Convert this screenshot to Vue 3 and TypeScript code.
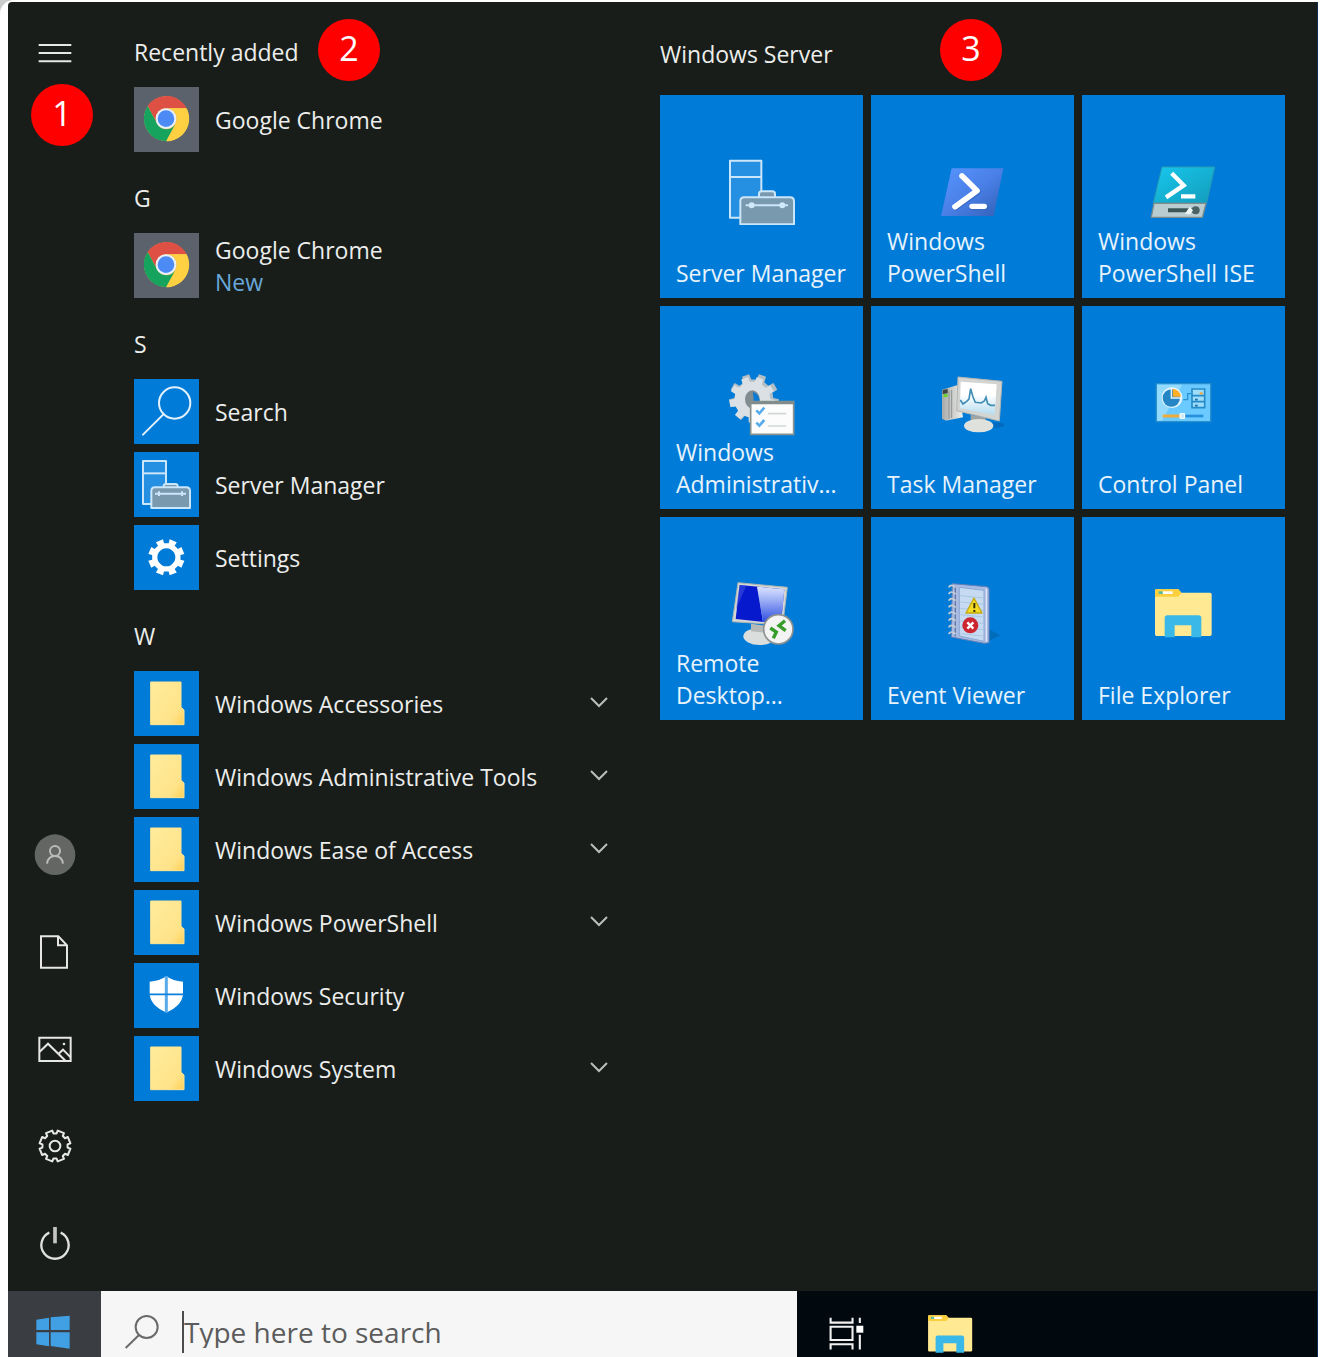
<script setup lang="ts">
import { ref } from 'vue'

interface Icon { box: string; art: string }
interface Entry { name: string; icon: string; note?: string; folder?: boolean }
interface Group { title: string; entries: Entry[] }

// Closed outline of a cog with flared, flat-topped teeth.
function cog(cx: number, cy: number, outer: number, root: number, teeth: number, tip: number, base: number): string {
  const points: string[] = []
  const step = (Math.PI * 2) / teeth
  const at = (r: number, a: number) => `${(cx + r * Math.sin(a)).toFixed(1)} ${(cy - r * Math.cos(a)).toFixed(1)}`
  for (let i = 0; i < teeth; i++) {
    const a = step * (i + 0.5)
    points.push(at(root, a - step * base), at(outer, a - step * tip), at(outer, a + step * tip), at(root, a + step * base))
  }
  return `M${points.join('L')}Z`
}

const explorer = `<path d="M283 92q0-4 4-4h66l9 10h86q5 0 5 5v120q0 5-5 5H287q-4 0-4-5z" fill="#ffe993"/>
<path d="M283 92q0-4 4-4h66l9 10-9 12h-70z" fill="#fcd03c"/><path d="M306 94h30v8h-30z" fill="#fff"/><path d="M294 94h12v8h-12z" fill="#57b9a8"/>
<path d="M312 232v-58q0-8 8-8h94q8 0 8 8v58h-30v-36h-50v36z" fill="#3ab8e8"/>`

const icons: Record<string, Icon> = {
  menu: { box: '92 88 144 144', art: '<path d="M115 136h98M115 160h98M115 185h98" stroke="#e6e6e6" stroke-width="6"/>' },
  user: {
    box: '92 61 144 144',
    art: '<circle cx="164" cy="132" r="61" fill="#636663"/><g fill="none" stroke="#b9bbb9" stroke-width="6"><circle cx="164" cy="121" r="15"/><path d="M140 159q3-23 24-23t24 23"/></g>',
  },
  document: {
    box: '92 352 144 144',
    art: '<path d="M122 377h52l26 27v67h-78zM173 378v26h26" fill="none" stroke="#e6e6e6" stroke-width="6"/>',
  },
  picture: {
    box: '92 643 144 144',
    art: '<g fill="none" stroke="#e6e6e6" stroke-width="6"><path d="M117 681h94v70h-94z"/><path d="M118 723l25-24 53 52M174 730l14-13 23 23"/></g><circle cx="191" cy="700" r="4" fill="#e6e6e6"/>',
  },
  gear: {
    box: '92 35 144 144',
    art: `<g fill="none" stroke="#e6e6e6" stroke-width="6" stroke-linejoin="round"><path d="${cog(164, 107, 47, 38, 8, 0.28, 0.34)}"/><circle cx="164" cy="107" r="16"/></g>`,
  },
  power: {
    box: '92 326 144 144',
    art: '<g fill="none" stroke="#e0e0e0"><path d="M147 367a41 41 0 1 0 34 0" stroke-width="7"/><path d="M164 350v49" stroke-width="11" stroke="#c4c4c4"/></g>',
  },
  chrome: {
    box: '401 262 195 195',
    art: `<circle cx="498" cy="357" r="67" fill="#e8c060"/>
<path d="M442 319A68 68 0 0 1 559 326L498 326A31 31 0 0 0 471 373Z" fill="#df5044"/>
<path d="M559 326A68 68 0 0 1 497 425L525 373A31 31 0 0 0 498 326Z" fill="#ffd142"/>
<path d="M442 319A68 68 0 0 0 497 425L525 373A31 31 0 0 1 471 373Z" fill="#16a35d"/>
<circle cx="497" cy="357" r="31" fill="#e9f0f8"/><circle cx="497" cy="357" r="25" fill="#4c8bf5"/>`,
  },
  search: {
    box: '41 26 195 195',
    art: '<g fill="none" stroke="#e3f1fc" stroke-width="6" stroke-linecap="round"><circle cx="163" cy="98" r="47"/><path d="M129 132L68 193"/></g>',
  },
  server: {
    box: '41 244 195 195',
    art: `<g stroke="#cbe5f9" stroke-width="6" stroke-linejoin="round"><path d="M68 271h69v129H68z" fill="#2590e2"/><path d="M68 308h69"/>
<path d="M130 352v-5q0-7 7-7h28q7 0 7 7v5" fill="#7899ae"/><path d="M93 412v-51q0-11 11-11h94q11 0 11 11v51z" fill="#7899ae"/><path d="M104 369h93M116 362v14M185 362v14"/></g>`,
  },
  settings: {
    box: '41 463 195 195',
    art: `<path fill-rule="evenodd" fill="#fff" d="${cog(138, 560, 55, 43, 8, 0.27, 0.29)}M138 533a27 27 0 1 0 .1 0Z"/>`,
  },
  folder: {
    box: '41 180 195 195',
    art: `<defs><linearGradient id="fold" x2="1" y2="1"><stop stop-color="#ffec9c"/><stop offset=".75" stop-color="#ffe389"/><stop offset="1" stop-color="#ffcf55"/></linearGradient></defs>
<path d="M91 213h91v76l9 8v44H91z" fill="url(#fold)" stroke="#ffe591" stroke-width="3"/>`,
  },
  shield: {
    box: '401 455 195 195',
    art: '<path d="M498 495q20 14 50 16v33q0 38-50 59-50-21-50-59v-33q30-2 50-16z" fill="#fff"/><path d="M498 494v110" stroke="#58aaeb" stroke-width="9"/><path d="M446 549h104" stroke="#0b7fdc" stroke-width="5"/>',
  },
  serverTile: {
    box: '232 231 204 204',
    art: `<g stroke="#cbe5f9" stroke-width="6" stroke-linejoin="round"><path d="M238 242h94v171h-94z" fill="#2590e2"/><path d="M238 291h94"/>
<path d="M325 352v-10q0-8 8-8h32q8 0 8 8v10" fill="#7899ae"/><path d="M269 433v-69q0-12 12-12h137q12 0 12 12v69z" fill="#7899ae"/><path d="M285 376h127"/></g>
<g fill="#cfe8fa"><circle cx="303" cy="376" r="9"/><circle cx="395" cy="376" r="9"/></g>`,
  },
  powershell: {
    box: '56 231 204 204',
    art: `<defs><linearGradient id="ps" x2="1" y2="1"><stop stop-color="#5795fd"/><stop offset=".5" stop-color="#4a80e8"/><stop offset="1" stop-color="#315fb4"/></linearGradient></defs>
<path d="M94 265h155l-29 143H62z" fill="url(#ps)"/><g fill="none" stroke-linecap="round" stroke-linejoin="round"><path d="M128 293l47 42-68 50M154 383h45" stroke="#2f5fb8" stroke-width="15" opacity=".5"/><path d="M125 288l45 44-66 48" stroke="#fff" stroke-width="17"/><path d="M155 379h37" stroke="#fff" stroke-width="16"/></g>`,
  },
  ise: {
    box: '688 231 204 204',
    art: `<defs><linearGradient id="ise" x2="1" y2="1"><stop stop-color="#16c8ec"/><stop offset="1" stop-color="#149bbb"/></linearGradient></defs>
<path d="M724 261h158l-24 108H698z" fill="url(#ise)" stroke="#269bb5" stroke-width="3"/><path d="M700 370h156l-11 42H692z" fill="#b9cdd0" stroke="#7f8d8a" stroke-width="4"/>
<g fill="none" stroke="#fff"><path d="M753 280l36 36-53 36" stroke-width="13"/><path d="M781 349h43" stroke-width="13"/></g>
<path d="M742 391h92" stroke="#3c5658" stroke-width="12"/><circle cx="825" cy="391" r="12" fill="#4b6365"/><path d="M793 401l14-21 10 11-8 12z" fill="#eef5f5"/>`,
  },
  admin: {
    box: '82 54 204 204',
    art: `<path d="${cog(160, 146, 75, 58, 9, 0.22, 0.3)}" fill="#b4bfc5"/><path d="${cog(155, 149, 69, 54, 9, 0.22, 0.3)}" fill="#dae0e4"/>
<ellipse cx="155" cy="148" rx="22" ry="27" fill="#818c91"/><path d="M157 126q19 5 20 28h-18z" fill="#0a7bd4"/><path d="M150 155h129v98H150z" fill="#fbfcfb" stroke="#87928f" stroke-width="5"/><path d="M150 158h129" stroke="#818c8a" stroke-width="9"/>
<path d="M167 181l9 9 15-17M167 218l9 9 15-17" fill="none" stroke="#57aceb" stroke-width="8"/><path d="M202 191h55M202 228h55" stroke="#d3d7d5" stroke-width="5"/>`,
  },
  task: {
    box: '56 54 204 204',
    art: `<defs><linearGradient id="tw" x2="1"><stop stop-color="#a7aaa9"/><stop offset="1" stop-color="#f0f0ed"/></linearGradient><linearGradient id="sc" x2="0" y2="1"><stop offset=".4" stop-color="#fff"/><stop offset="1" stop-color="#b5dcef"/></linearGradient></defs>
<ellipse cx="226" cy="225" rx="26" ry="8" fill="#005fae" opacity=".6"/><path d="M65 119l47-14 16 97-51 10-12-6z" fill="url(#tw)"/><path d="M86 122v84M94 120v84" stroke="#8d9190" stroke-width="3"/><path d="M67 120l15-3v13l-15 2z" fill="#3c4540"/><path d="M69 133l13-2v10l-13 1z" fill="#70cf34"/>
<path d="M151 194l45 9v16h-45z" fill="#a0a4a3"/><ellipse cx="175" cy="227" rx="44" ry="20" fill="#dfe1dd"/><path d="M113 81l132 13-8 119-128-31z" fill="#d3d5d2" stroke="#b1b5b2" stroke-width="3"/><path d="M121 95l108 8-6 92-104-20z" fill="url(#sc)"/>
<path d="M120 150l8 12 11-8 7-7 5-31 7 25 7 16 18 2 9-6 5-11 5 19 9 5h13" fill="none" stroke="#418eb5" stroke-width="5"/>`,
  },
  control: {
    box: '688 54 204 204',
    art: `<path d="M707 101h163v114H707z" fill="#6bcaff" stroke="#2a8ecb" stroke-width="4"/><path d="M709 104h75l-60 108h-15z" fill="#94dafd"/>
<circle cx="754" cy="143" r="31" fill="#eaf6fe"/><circle cx="752" cy="144" r="26" fill="#2586c5"/><path d="M752 112v32h32" fill="none" stroke="#e7f5fd" stroke-width="4"/><path d="M756 116a27 27 0 0 1 25 24h-25z" fill="#ffae28"/>
<path d="M788 149h13v-18h11" fill="none" stroke="#2b94d4" stroke-width="4"/><path d="M814 117h38v56h-38zM814 137h38M814 155h38" fill="#9ddcfa" stroke="#268cc8" stroke-width="5"/><path d="M837 130h9" stroke="#f3a532" stroke-width="6"/><path d="M823 149h8M823 167h8" stroke="#1d6ea5" stroke-width="5"/>
<path d="M726 198h52" stroke="#efac3a" stroke-width="9"/><path d="M792 198h56" stroke="#2790db" stroke-width="8"/><path d="M778 191h14v14h-14z" fill="#ccebfd" stroke="#fff" stroke-width="3"/>`,
  },
  remote: {
    box: '82 57 204 204',
    art: `<defs><linearGradient id="rd" x2="0" y2="1"><stop stop-color="#3459e8" stop-opacity="0"/><stop offset="1" stop-color="#2545dc"/></linearGradient></defs>
<ellipse cx="177" cy="229" rx="49" ry="26" fill="#dadedd"/><path d="M151 191l47 7v20l-47-4z" fill="#b5b9b8"/><path d="M112 68l148 14-14 113-151-10z" fill="#d5d8d5" stroke="#aeb4b1" stroke-width="3"/><path d="M117 75l134 13-10 103-136-14z" fill="#0719cc"/><path d="M169 80l82 8-10 103-54-5z" fill="#dce4ff"/><path d="M169 80l82 8-10 103-54-5z" fill="url(#rd)"/><path d="M117 75l20 2-31 70z" fill="#3a4fe0" opacity=".6"/>
<circle cx="233" cy="208" r="44" fill="#f2f3f2" stroke="#8d908e" stroke-width="5"/><path d="M209 204l18 12-9 19M253 182l-18 15 20 15" fill="none" stroke="#379c2a" stroke-width="10"/>`,
  },
  event: {
    box: '716 57 204 204',
    art: `<path d="M861 205l38 21-39 19z" fill="#005d9d" opacity=".5"/><path d="M756 71l102 9q8 1 8 9v159l-14 2-99-19z" fill="#a9bbe2" stroke="#6781b6" stroke-width="3"/><path d="M777 82l74 9v153l-74-16z" fill="#c6dbf1" stroke="#8ea8d3" stroke-width="3"/><path d="M858 86v159" stroke="#dce6f8" stroke-width="4"/>
<path d="M780 107l70 7M780 126l70 7M780 145l70 7M780 164l70 7M780 183l70 7M780 202l70 7M780 221l70 7" stroke="#9bbdda" stroke-width="2"/><path d="M765 77v152" stroke="#6478a4" stroke-width="4"/>
<path d="M745 82q7-12 21 0M745 102q7-12 21 0M745 122q7-12 21 0M745 142q7-12 21 0M745 162q7-12 21 0M745 182q7-12 21 0M745 202q7-12 21 0M745 222q7-12 21 0" fill="none" stroke="#c6cdd5" stroke-width="5"/>
<path d="M821 114l24 45h-48z" fill="#f3db21" stroke="#c5a915" stroke-width="4" stroke-linejoin="round"/><path d="M822 129v16M822 150v6" stroke="#332e08" stroke-width="6"/><circle cx="810" cy="196" r="24" fill="#cc2630"/><path d="M801 187l18 19M819 187l-18 19" stroke="#fff" stroke-width="7"/>`,
  },
  explorer: { box: '268 57 204 204', art: explorer },
  explorerSmall: { box: '275 60 185 185', art: explorer },
  start: { box: '92 594 144 144', art: '<path d="M108 629l38-6v37h-38zM151 622l57-5v43h-57zM108 667h38v42l-38-6zM151 667h57v49l-57-8z" fill="#419fe4"/>' },
  find: { box: '354 594 144 144', art: '<g fill="none" stroke="#6a6a6a" stroke-width="6"><circle cx="440" cy="651" r="33"/><path d="M417 675l-40 39"/></g>' },
  taskView: {
    box: '126 80 138 138',
    art: '<g fill="none" stroke="#f1f1f1" stroke-width="6"><path d="M145 108v14h63v-14M145 134h63v38h-63zM145 199v-15h63v15M229 108v15M229 157v42"/></g><path d="M219 131h20v20h-20z" fill="#fff"/>',
  },
}

const groups: Group[] = [
  { title: 'Recently added', entries: [{ name: 'Google Chrome', icon: 'chrome' }] },
  { title: 'G', entries: [{ name: 'Google Chrome', icon: 'chrome', note: 'New' }] },
  {
    title: 'S',
    entries: [
      { name: 'Search', icon: 'search' },
      { name: 'Server Manager', icon: 'server' },
      { name: 'Settings', icon: 'settings' },
    ],
  },
  {
    title: 'W',
    entries: [
      { name: 'Windows Accessories', icon: 'folder', folder: true },
      { name: 'Windows Administrative Tools', icon: 'folder', folder: true },
      { name: 'Windows Ease of Access', icon: 'folder', folder: true },
      { name: 'Windows PowerShell', icon: 'folder', folder: true },
      { name: 'Windows Security', icon: 'shield' },
      { name: 'Windows System', icon: 'folder', folder: true },
    ],
  },
]

const tiles = [
  { lines: ['Server Manager'], icon: 'serverTile' },
  { lines: ['Windows', 'PowerShell'], icon: 'powershell' },
  { lines: ['Windows', 'PowerShell ISE'], icon: 'ise' },
  { lines: ['Windows', 'Administrativ...'], icon: 'admin' },
  { lines: ['Task Manager'], icon: 'task' },
  { lines: ['Control Panel'], icon: 'control' },
  { lines: ['Remote', 'Desktop...'], icon: 'remote' },
  { lines: ['Event Viewer'], icon: 'event' },
  { lines: ['File Explorer'], icon: 'explorer' },
]

const railItems = [
  { label: 'Account', icon: 'user' },
  { label: 'Documents', icon: 'document' },
  { label: 'Pictures', icon: 'picture' },
  { label: 'Settings', icon: 'gear' },
  { label: 'Power', icon: 'power' },
]

const query = ref('')
</script>

<template>
  <div class="frame">
    <div class="screen">
      <main class="menu">
        <nav class="rail" aria-label="Start">
          <button class="rail-button" type="button" aria-label="Expand">
            <svg class="icon-small" :viewBox="icons.menu.box" v-html="icons.menu.art"></svg>
          </button>
          <div class="rail-bottom">
            <button v-for="item in railItems" :key="item.icon" class="rail-button" type="button" :aria-label="item.label">
              <svg class="icon-small" :viewBox="icons[item.icon].box" v-html="icons[item.icon].art"></svg>
            </button>
          </div>
        </nav>

        <div class="apps">
          <section v-for="group in groups" :key="group.title">
            <h2 class="group-title">{{ group.title }}</h2>
            <ul class="entries">
              <li v-for="entry in group.entries" :key="entry.name">
                <button class="entry" type="button">
                  <span class="entry-icon" :class="{ grey: entry.icon === 'chrome' }">
                    <svg :viewBox="icons[entry.icon].box" v-html="icons[entry.icon].art"></svg>
                  </span>
                  <span class="entry-text">
                    <span>{{ entry.name }}</span>
                    <span v-if="entry.note" class="note">{{ entry.note }}</span>
                  </span>
                  <svg v-if="entry.folder" class="chevron" viewBox="0 0 24 24">
                    <path d="M4 6l8 8 8-8" fill="none" stroke="#bcbebc" stroke-width="2" />
                  </svg>
                </button>
              </li>
            </ul>
          </section>
        </div>

        <section class="pinned">
          <h2 class="pinned-title">Windows Server</h2>
          <div class="tiles">
            <button v-for="tile in tiles" :key="tile.icon" class="tile" type="button">
              <svg class="tile-icon" :viewBox="icons[tile.icon].box" v-html="icons[tile.icon].art"></svg>
              <span class="tile-label">
                <span v-for="line in tile.lines" :key="line">{{ line }}</span>
              </span>
            </button>
          </div>
        </section>

        <span class="badge badge-rail">1</span>
        <span class="badge badge-apps">2</span>
        <span class="badge badge-pinned">3</span>
      </main>

      <footer class="taskbar">
        <button class="start" type="button" aria-label="Start">
          <svg class="icon-small" :viewBox="icons.start.box" v-html="icons.start.art"></svg>
        </button>
        <label class="search">
          <svg class="icon-small" :viewBox="icons.find.box" v-html="icons.find.art"></svg>
          <span class="caret"></span>
          <input v-model="query" type="text" placeholder="Type here to search" aria-label="Search" />
        </label>
        <button class="task" type="button" aria-label="Task View">
          <svg class="icon-small" :viewBox="icons.taskView.box" v-html="icons.taskView.art"></svg>
        </button>
        <button class="task" type="button" aria-label="File Explorer">
          <svg class="icon-small" :viewBox="icons.explorerSmall.box" v-html="icons.explorerSmall.art"></svg>
        </button>
      </footer>
    </div>
  </div>
</template>

<style>
body {
  background: #c9cccb;
}
</style>

<style scoped>
* {
  box-sizing: border-box;
}
button {
  margin: 0;
  padding: 0;
  border: 0;
  background: none;
  color: inherit;
  font: inherit;
  text-align: left;
}
svg {
  display: block;
}
.frame {
  display: flex;
  min-height: 100vh;
  padding: 2px 5px 0 8px;
  border-radius: 14px 0 0 0;
  background: #fff;
  font-family: "Open Sans", "Noto Sans", sans-serif;
  font-size: 23px;
  line-height: 32px;
  color: #ecedec;
}
.screen {
  display: flex;
  flex: 1;
  flex-direction: column;
  min-width: 0;
  overflow: hidden;
  border-right: 1px solid #0d2d55;
  border-radius: 4px 0 0 0;
  background: #181d19;
}
.menu {
  position: relative;
  display: flex;
  flex: 1;
}
.rail {
  display: flex;
  flex: 0 0 93px;
  flex-direction: column;
  justify-content: space-between;
  padding-top: 2px;
}
.rail-button {
  display: flex;
  align-items: center;
  justify-content: center;
  width: 100%;
  height: 97px;
}
.icon-small {
  flex: none;
  width: 48px;
  height: 48px;
}
.apps {
  flex: 0 1 559px;
  padding: 8px 40px 0 33px;
}
.group-title,
.pinned-title {
  display: flex;
  align-items: center;
  margin: 0;
  padding-top: 10px;
  font-size: 23px;
  font-weight: 400;
}
.group-title {
  height: 73px;
}
.pinned-title {
  height: 93px;
}
.entries {
  margin: 0;
  padding: 0;
  list-style: none;
}
.entry {
  display: flex;
  align-items: center;
  width: 100%;
  height: 73px;
}
.entry-icon {
  flex: none;
  width: 65px;
  height: 65px;
  background: #007cd8;
}
.entry-icon.grey {
  background: #5b626b;
}
.entry-text {
  display: flex;
  flex: 1;
  flex-direction: column;
  padding-left: 16px;
  white-space: nowrap;
}
.note {
  color: #68a7d8;
}
.chevron {
  width: 24px;
  height: 24px;
  margin-right: 9px;
}
.pinned {
  flex: 1;
}
.tiles {
  display: grid;
  grid-template-columns: repeat(3, 203px);
  gap: 8px;
}
.tile {
  display: flex;
  flex-direction: column;
  justify-content: space-between;
  height: 203px;
  padding: 62px 0 9px 16px;
  background: #007cd8;
}
.tile-icon {
  flex: none;
  align-self: center;
  width: 68px;
  height: 68px;
  margin-right: 16px;
}
.tile-label {
  display: flex;
  flex-direction: column;
  white-space: nowrap;
  color: #e8f3fc;
}
.badge {
  position: absolute;
  display: flex;
  align-items: center;
  justify-content: center;
  width: 62px;
  height: 62px;
  padding-bottom: 4px;
  border-radius: 50%;
  background: #fe0000;
  color: #fff;
  font-size: 34px;
}
.badge-rail {
  top: 82px;
  left: 23px;
}
.badge-apps {
  top: 17px;
  left: 310px;
}
.badge-pinned {
  top: 17px;
  left: 932px;
}
.taskbar {
  display: flex;
  height: 66px;
  background: #02090e;
}
.start,
.search,
.task {
  display: flex;
  align-items: center;
  padding-top: 16px;
}
.start {
  flex: 0 0 93px;
  justify-content: center;
  background: #3a3d41;
}
.search {
  flex: 0 1 696px;
  padding-left: 17px;
  background: #f6f6f6;
}
.caret {
  width: 2px;
  height: 42px;
  margin-left: 16px;
  background: #4c4c4c;
}
.search input {
  flex: 1;
  min-width: 0;
  padding: 0;
  border: 0;
  outline: 0;
  background: none;
  color: #555;
  font: inherit;
  font-size: 28px;
}
.search input::placeholder {
  color: #5c5c5c;
  opacity: 1;
}
.task {
  flex: 0 0 102px;
  justify-content: center;
}
</style>
